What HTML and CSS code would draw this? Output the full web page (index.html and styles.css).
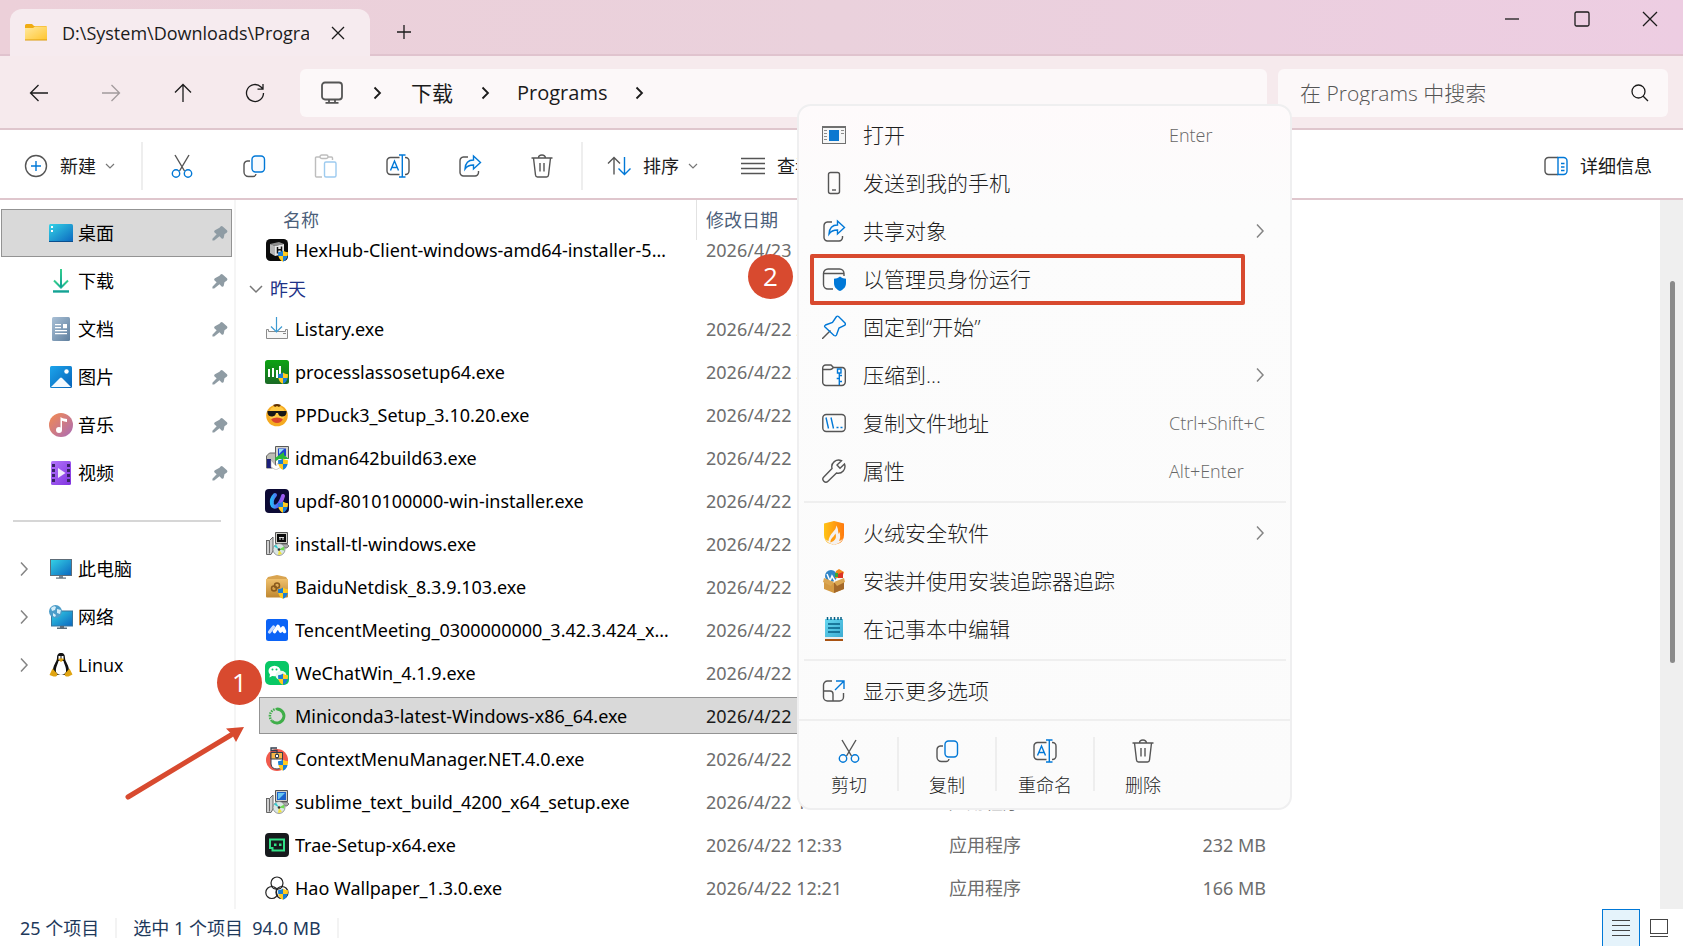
FILE: index.html
```html
<!DOCTYPE html>
<html lang="zh-CN">
<head>
<meta charset="utf-8">
<title>D:\System\Downloads\Programs</title>
<link rel="stylesheet" href="styles.css">
</head>
<body>
<svg class="sprite" aria-hidden="true">
  <defs>
    <linearGradient id="g-folder" x1="0" y1="0" x2="1" y2="1"><stop offset="0" stop-color="#ffe9a0"/><stop offset="1" stop-color="#ffc52e"/></linearGradient>
    <linearGradient id="g-screen" x1="0" y1="0" x2="1" y2="1"><stop offset="0" stop-color="#35d3e6"/><stop offset="1" stop-color="#0b66bf"/></linearGradient>
    <linearGradient id="g-down" x1="0" y1="0" x2="0" y2="1"><stop offset="0" stop-color="#35cf8d"/><stop offset="1" stop-color="#0f9f96"/></linearGradient>
    <linearGradient id="g-doc" x1="0" y1="0" x2="1" y2="1"><stop offset="0" stop-color="#a9c0d6"/><stop offset="1" stop-color="#5f7f9e"/></linearGradient>
    <linearGradient id="g-pic" x1="0" y1="0" x2="1" y2="1"><stop offset="0" stop-color="#1ca5ec"/><stop offset="1" stop-color="#0762b8"/></linearGradient>
    <linearGradient id="g-music" x1="0" y1="0" x2="1" y2="1"><stop offset="0" stop-color="#f58b4e"/><stop offset="1" stop-color="#a96bb8"/></linearGradient>
    <linearGradient id="g-video" x1="0" y1="0" x2="1" y2="1"><stop offset="0" stop-color="#b375fb"/><stop offset="1" stop-color="#8033df"/></linearGradient>
    <linearGradient id="g-green" x1="0" y1="0" x2="0" y2="1"><stop offset="0" stop-color="#0ca312"/><stop offset="1" stop-color="#1a6a25"/></linearGradient>
    <linearGradient id="g-fire" x1="0" y1="0" x2="1" y2="0"><stop offset="0" stop-color="#ffc416"/><stop offset="1" stop-color="#ff7a0f"/></linearGradient>
    <linearGradient id="g-box" x1="0" y1="0" x2="0" y2="1"><stop offset="0" stop-color="#efc06c"/><stop offset="1" stop-color="#bf8731"/></linearGradient>
    <linearGradient id="g-updf" x1="0" y1="0" x2="1" y2="0"><stop offset="0" stop-color="#2bb5f6"/><stop offset=".5" stop-color="#5a62f5"/><stop offset="1" stop-color="#a05cf0"/></linearGradient>
    <linearGradient id="g-note" x1="0" y1="0" x2="1" y2="1"><stop offset="0" stop-color="#66d7f0"/><stop offset="1" stop-color="#3cabd2"/></linearGradient>
    <clipPath id="c-shield"><path d="M18 12.500c1.500 1.200 3 1.700 5 1.700 0 5-1.500 8-5 9.600-3.500-1.600-5-4.600-5-9.600 2 0 3.500-.5 5-1.700z"/></clipPath>
  </defs>
  <symbol id="shield" viewBox="0 0 24 24"><g clip-path="url(#c-shield)"><path fill="#1b7fd4" d="M12 12h6v6h-6zM18 18h6v6h-6z"/><path fill="#ffcb1f" d="M18 12h6v6h-6zM12 18h6v6h-6z"/></g></symbol>

  <symbol id="folder" viewBox="0 0 24 24"><path fill="#f0ab12" d="M1 4.500Q1 3 2.500 3H8l2 2h12.500v4H1z"/><path fill="url(#g-folder)" d="M1 7h8l2-1.500h12V19H1z"/><path fill="#dd9c0c" d="M1 18.500h22v1H1z"/></symbol>
  <symbol id="close" viewBox="0 0 24 24"><path d="M6 6l12 12M18 6L6 18"/></symbol>
  <symbol id="plus" viewBox="0 0 24 24"><path d="M12 5v14M5 12h14"/></symbol>
  <symbol id="min" viewBox="0 0 24 24"><path d="M5 12h14"/></symbol>
  <symbol id="max" viewBox="0 0 24 24"><rect x="5" y="5" width="14" height="14" rx="1.500"/></symbol>
  <symbol id="winclose" viewBox="0 0 24 24"><path d="M5 5l14 14M19 5L5 19"/></symbol>
  <symbol id="back" viewBox="0 0 24 24"><path d="M21 12H3.500M11.500 4l-8 8 8 8"/></symbol>
  <symbol id="fwd" viewBox="0 0 24 24"><path d="M3 12h17.500M12.500 4l8 8-8 8"/></symbol>
  <symbol id="up" viewBox="0 0 24 24"><path d="M12 21V3.500M4 11.500l8-8 8 8"/></symbol>
  <symbol id="reload" viewBox="0 0 24 24"><path d="M20.500 12A8.500 8.500 0 1 1 18 6l2 2M20 3v5.200h-5.500"/></symbol>
  <symbol id="pc" viewBox="0 0 24 24"><rect x="2" y="1.500" width="20" height="17" rx="3"/><path d="M9 18.500v3M15 18.500v3M5.500 21.800h13"/></symbol>
  <symbol id="chev" viewBox="0 0 24 24"><path d="M9.500 6.500L15 12l-5.500 5.500"/></symbol>
  <symbol id="chevd" viewBox="0 0 24 24"><path d="M8 10l4 4 4-4"/></symbol>
  <symbol id="mchev" viewBox="0 0 24 24"><path d="M9 5.500l6 6.500-6 6.500"/></symbol>
  <symbol id="search" viewBox="0 0 24 24"><circle cx="10.500" cy="10.500" r="6.500"/><path d="M15.200 15.200L20 20"/></symbol>

  <symbol id="new" viewBox="0 0 24 24"><circle cx="12" cy="12" r="10.500"/><path class="b" d="M12 7v10M7 12h10"/></symbol>
  <symbol id="cut" viewBox="0 0 24 24"><path d="M5 1l9.500 16M19 1L9.500 17"/><circle class="b" cx="6" cy="19.500" r="3.700"/><circle class="b" cx="18" cy="19.500" r="3.700"/></symbol>
  <symbol id="copy" viewBox="0 0 24 24"><path d="M8 7H5.500A4 4 0 0 0 2 11v7a4.500 4.500 0 0 0 4.500 4.500H11a3 3 0 0 0 3-2.500"/><rect class="b" x="10" y="2" width="12.500" height="16" rx="3.500" fill="#f7fbff"/></symbol>
  <symbol id="paste" viewBox="0 0 24 24"><path d="M6 3H2.500Q1.500 3 1.500 4v18q0 1 1 1H8M14 3h3.500Q18.500 3 18.500 4v2"/><rect x="6" y="1" width="8" height="3.500" rx="1.700"/><rect class="b" x="10.500" y="8" width="11.500" height="15" rx="1.500"/></symbol>
  <symbol id="rename" viewBox="0 0 24 24"><path d="M13.500 3.500h-9A3.500 3.500 0 0 0 1 7v10a3.500 3.500 0 0 0 3.500 3.500h9M19 3.500h.5A3.500 3.500 0 0 1 23 7v10a3.500 3.500 0 0 1-3.500 3.500H19"/><path class="b" d="M4.500 16.500L8.500 7l4 9.500M6 13.500h5.500M16.300 1v22M13 1h6.500M13 23h6.500"/></symbol>
  <symbol id="share" viewBox="0 0 24 24"><path d="M10 3H5.500A4 4 0 0 0 2 7v11.500A3.500 3.500 0 0 0 5.500 22H17a3.500 3.500 0 0 0 3.500-3.500V17"/><path class="b" d="M15.500 2l7 6.500-7 6.500v-4c-4 0-6.500 1-8.500 4 .3-5 3-9 8.500-9z" fill="#f7fbff"/></symbol>
  <symbol id="trash" viewBox="0 0 24 24"><path d="M1.500 4h21M8.500 4a3.500 3 0 0 1 7 0M3.500 4l2 17q.2 2 2 2h9q1.800 0 2-2l2-17M10 9v8.500M14 9v8.500"/></symbol>
  <symbol id="sort" viewBox="0 0 24 24"><path d="M7 20.500V3.500M1 9.500l6-6 6 6"/><path class="b" d="M17.500 3v17.500M11.500 14.500l6 6 6-6"/></symbol>
  <symbol id="list" viewBox="0 0 24 24"><path d="M0 4.500h24M0 9.500h24M0 14.500h24M0 19.500h24"/></symbol>
  <symbol id="detail" viewBox="0 0 24 24"><path d="M14 3.500H4.500A3.500 3.500 0 0 0 1 7v10a3.500 3.500 0 0 0 3.500 3.500H14"/><path class="b" d="M14 3.500h5.500A3.500 3.500 0 0 1 23 7v10a3.500 3.500 0 0 1-3.500 3.500H14zM17 9.500h3.500M17 13h3.500M17 16.500h3.500"/></symbol>

  <symbol id="desktop" viewBox="0 0 24 24"><rect y="3" width="24" height="18" rx="1.500" fill="url(#g-screen)"/><path fill="#fff" d="M2 5h2v2H2zM2 9h2v2H2z"/><path fill="#0b4f8e" d="M0 20h24v1H0z"/></symbol>
  <symbol id="download" viewBox="0 0 24 24"><path fill="none" stroke="url(#g-down)" stroke-width="2" d="M5 11.500l7 7 7-7M4 22.500h16"/><path fill="url(#g-down)" d="M11 0h2v18h-2z"/><path fill="#14a394" d="M4 21.500h16v1.800H4z"/></symbol>
  <symbol id="doc" viewBox="0 0 24 24"><rect x="3" width="18" height="24" rx="1.500" fill="url(#g-doc)"/><path fill="#fff" d="M6 7h6v1.200H6zM6 10h6v1.200H6zM14 7h4v4.200h-4zM6 13h12v1.200H6zM6 16h12v1.200H6z"/></symbol>
  <symbol id="pic" viewBox="0 0 24 24"><rect x="1" y="1" width="22" height="22" rx="1.500" fill="url(#g-pic)"/><path fill="#f3f9fe" d="M2 22l9-9q1-1 2 0l9 9z"/><circle cx="17.500" cy="6.500" r="2.200" fill="#fff"/></symbol>
  <symbol id="music" viewBox="0 0 24 24"><circle cx="12" cy="12" r="12" fill="url(#g-music)"/><circle cx="10" cy="17" r="3" fill="#fff"/><path fill="#fff" d="M11.500 4c2 1.500 4.500 1.500 6.500 2v3c-2-.2-3.500-.6-5-1.200V17h-1.500z"/></symbol>
  <symbol id="video" viewBox="0 0 24 24"><rect x="2" width="20" height="24" rx="1.500" fill="url(#g-video)"/><path fill="#3a2468" d="M3 3h3v3H3zM3 8h3v3H3zM3 13h3v3H3zM3 18h3v3H3zM18 3h3v3h-3zM18 8h3v3h-3zM18 13h3v3h-3zM18 18h3v3h-3z"/><path fill="#f0eafa" d="M9 7l7.500 5L9 17z"/></symbol>
  <symbol id="pin" viewBox="0 0 24 24"><path fill="#8f9ca4" d="M12 4l1.500-2q1.500-1.500 3 0l6 5.500q1.500 1.500 0 3L19 13l-1 5q-1 2.500-3 1l-3-3L4.500 22H2v-2.500L8 13l-3-2.500q-1.500-2 .5-3z"/></symbol>
  <symbol id="monitor" viewBox="0 0 24 24"><rect x="1.500" y="2.500" width="21" height="16" fill="url(#g-screen)" stroke="#5d6c78"/><path fill="#7c8a94" d="M10 19h4v2h-4z"/><path fill="#5d6c78" d="M7 20.500h10v1.200H7z"/></symbol>
  <symbol id="network" viewBox="0 0 24 24"><rect x="2.500" y="6" width="21" height="15" fill="url(#g-screen)" stroke="#38759c"/><path fill="#5d6c78" d="M11 21h4v1.500h3V24H8v-1.500h3z"/><circle cx="6.500" cy="6.500" r="6.500" fill="#4b9cc9"/><path fill="#d5edf8" d="M2 3q3-3 5-1L6 5 3 6zM8 4l4 1-1 4-3-1zM4 8l3 2-1 2-2-1z"/></symbol>
  <symbol id="tux" viewBox="0 0 24 24"><path fill="#111" d="M12 0c3 0 4 2 4 5 0 4 4.500 7 4 14l-3 3H7l-3-3C3.500 12 8 9 8 5c0-3 1-5 4-5z"/><path fill="#fff" d="M9.500 8h5c1 4 3 6 2.500 11-2 4-8 4-10 0-.5-5 1.500-7 2.500-11zM9.500 3h2v3h-2zM12.500 3h2v3h-2z"/><path fill="#e0a412" d="M9 6.500q3-2.500 6 0L12 9zM3.500 15.500l5 5.500q0 3-4 2.500l-4-1.500zM20.500 15.500l-5 5.500q0 3 4 2.500l4-2z"/></symbol>

  <symbol id="hex" viewBox="0 0 24 24"><rect x="1" y="1" width="22" height="22" rx="4.500" fill="#0b0b0b"/><path fill="#8e8e8e" d="M5 6l9-2 5 2-9 2z"/><path fill="#e5e5e5" d="M10 8l9-2v10l-9 2z"/><path fill="#b6b6b6" d="M5 6l5 2v10l-5-3z"/><path stroke="#111" stroke-width="1.500" fill="none" d="M12.500 9v6.500M16.500 8.500V15M12.500 12l4-.5"/></symbol>
  <symbol id="listary" viewBox="0 0 24 24"><path fill="#f7f7f7" stroke="#8b8b8b" d="M1.500 12.500h2v2h17v-2h2v9h-21z"/><path stroke="#888" d="M18 16.500h3"/><path fill="none" stroke="#3d9ad1" stroke-width="1.200" d="M11.500 0v14.500M6 9.500l5.500 5.500L17 9.500"/></symbol>
  <symbol id="lasso" viewBox="0 0 24 24"><rect width="24" height="24" rx="2.500" fill="url(#g-green)"/><path fill="#fff" d="M3 9h2v8H3zM7 8h2v9H7zM11 10h2v8h-2zM14 6h2v12h-2z"/></symbol>
  <symbol id="duck" viewBox="0 0 24 24"><circle cx="12" cy="12.500" r="10.800" fill="#f5aa21"/><circle cx="12" cy="11" r="8" fill="#ffca45"/><path fill="#603000" d="M8 2q4-2 8 0l-2 2-2-1-2 1z"/><path fill="#171717" d="M2.500 8h19v2q-1 4-5 3.500-3-.5-3.500-3.500h-2q-.5 3-3.500 3.500-4 .5-5-3.500z"/><path fill="#d9452d" d="M6 16q6-3 12 0-2 4-6 4t-6-4z"/></symbol>
  <symbol id="idm" viewBox="0 0 24 24"><path fill="#d4d4cc" stroke="#5a5a5a" d="M10.500.5h13v12h-13z"/><path fill="#1d43d1" d="M13 2.500h8V10h-8z"/><path fill="#9adcf6" d="M14 3h5l-5 5z"/><path fill="#bdbdb5" stroke="#666" d="M1.500 10l3-3h6v12l-3 3h-6z"/><path fill="#1c1f7a" d="M2 13h4v9H2z"/><path fill="#fff" stroke="#999" stroke-width=".5" d="M6 14l5 6 2-3 3 4-5 3-5-3z"/><path fill="#28b938" d="M10 12l9-6v3l5 4H14l-3 2z"/></symbol>
  <symbol id="updf" viewBox="0 0 24 24"><rect width="24" height="24" rx="4" fill="#0c0a35"/><path fill="none" stroke="url(#g-updf)" stroke-width="4" stroke-linecap="round" d="M10 6q-4 4-3 9 1 4 5 2 4-3 6-10"/></symbol>
  <symbol id="setup" viewBox="0 0 24 24"><path fill="#cfcfc9" stroke="#555" d="M10.500.5h12v11h-12z"/><path fill="#0a0a0a" d="M12 2h9v8h-9z"/><path stroke="#ddd" fill="none" d="M14 5.500h5M15 5v3M18 5v3"/><path fill="#cfcfcf" stroke="#666" d="M1 8.500h3.500L8 5v14l-2 3.500H1.500V9M4.500 8.500v13"/><path fill="#aaa" stroke="#555" stroke-width=".7" d="M13 12h9l2 2-2 2h-8z"/><circle cx="14" cy="17.500" r="6" fill="#d9e6e4" stroke="#777" stroke-width=".7"/><path fill="#6edb53" d="M14 17.500l5-3 .5 4z"/><path fill="#36c9ce" d="M14 17.500l-5-3 2-2z"/><path fill="#f1e33a" d="M14 17.500l-1 5.500 4-1z"/><circle cx="14" cy="17.500" r="1.300" fill="#333"/></symbol>
  <symbol id="baidu" viewBox="0 0 24 24"><path fill="#d9a450" d="M3 2l9-2 9 2 2 3H1z"/><rect x="1" y="4" width="22" height="18.500" rx="1" fill="url(#g-box)"/><circle cx="9" cy="13.500" r="2.500" fill="none" stroke="#8a5a1c" stroke-width="1.500"/><circle cx="12" cy="10.500" r="2.500" fill="none" stroke="#8a5a1c" stroke-width="1.500"/></symbol>
  <symbol id="tencent" viewBox="0 0 24 24"><rect x="1" y="1" width="22" height="22" rx="2.500" fill="#0b63f6"/><path fill="none" stroke="#c9dcff" stroke-width="3.200" stroke-linecap="round" stroke-linejoin="round" d="M4.500 14L8.500 9"/><path fill="none" stroke="#fff" stroke-width="3.600" stroke-linecap="round" stroke-linejoin="round" d="M9.500 13.500l3.500-5 2.500 4.500 2.500-3 1.500 3.500"/></symbol>
  <symbol id="wechat" viewBox="0 0 24 24"><rect width="24" height="24" rx="5" fill="#08c765"/><ellipse cx="9.500" cy="10" rx="6" ry="5.200" fill="#fff"/><path fill="#fff" d="M5 13l-.5 3.500L8 14.500z"/><ellipse cx="16" cy="14.500" rx="5.500" ry="4.700" fill="#e7f9ee"/><circle cx="7.500" cy="8.500" r="1" fill="#08c765"/><circle cx="11.500" cy="8.500" r="1" fill="#08c765"/></symbol>
  <symbol id="conda" viewBox="0 0 24 24"><path fill="none" stroke="#3fae49" stroke-width="3" d="M12 5a7 7 0 1 1-5 12"/><path fill="none" stroke="#3fae49" stroke-width="2.500" stroke-dasharray="1.500 1" d="M7 17a7 7 0 0 1 5-12"/></symbol>
  <symbol id="cmm" viewBox="0 0 24 24"><circle cx="12" cy="13" r="11" fill="#f15b4d"/><path fill="none" stroke="#333e4e" stroke-width="1.300" d="M12 6V3.500H6V1h6"/><path fill="#fff" stroke="#333e4e" d="M6 5.500h11.500V17q0 5-5.500 5t-6-5z"/><path fill="#f8b646" stroke="#333e4e" d="M6 5.500h11.500V12H6zM12 5.500V12"/><path fill="#fff" stroke="#333e4e" d="M10.500 7.500h3v3h-3z"/></symbol>
  <symbol id="subl" viewBox="0 0 24 24"><use href="#setup"/><path fill="#1b62cc" d="M12 2h9v8h-9z"/><path fill="#67c6f2" d="M13 3h7l-6 6h-1z"/></symbol>
  <symbol id="trae" viewBox="0 0 24 24"><rect width="24" height="24" rx="4" fill="#171a1d"/><path fill="none" stroke="#32e086" stroke-width="2" d="M5 6.500h14v11H7.500V15H5z"/><path fill="#32e086" d="M9 10.500h2.500V13H9zM14 10.500h2.500V13H14z"/></symbol>
  <symbol id="hao" viewBox="0 0 24 24"><g fill="#fff" stroke="#222" stroke-width="1.200"><circle cx="12" cy="7" r="6"/><circle cx="6.800" cy="16.500" r="6"/><circle cx="17" cy="16.500" r="6"/><path d="M6.500 10.500q2 3 5.500 2.500 3.500.5 5.500-2.500M12 13q-1.500 4 1 7" fill="none"/></g></symbol>

  <symbol id="open" viewBox="0 0 24 24"><rect x=".5" y="3.500" width="23" height="17" fill="#f6f6f6" stroke="#707070"/><path fill="#707070" d="M0 3h24v2H0z"/><path stroke="#8c8c8c" d="M2 7.500h3M2 10.500h3M2 13.500h3M2 16.500h3M19 7.500h3M19 10.500h3"/><rect x="7" y="7" width="10" height="11" fill="#0b78d0"/></symbol>
  <symbol id="phone" viewBox="0 0 24 24"><rect x="6.500" y="1.500" width="11" height="21" rx="2"/><path d="M10 19h4"/></symbol>
  <symbol id="admin" viewBox="0 0 24 24"><path d="M11 22H6a4.500 4.500 0 0 1-4.500-4.500v-11A4.500 4.500 0 0 1 6 2h11.500A4.500 4.500 0 0 1 22 6.500V9M1.500 6.500H22"/><path class="bf" d="M18 9.500c2 1.800 4 2.200 6 2.200v4.300c0 4-2.500 6.500-6 8-3.500-1.500-6-4-6-8v-4.300c2 0 4-.4 6-2.200z"/></symbol>
  <symbol id="pinstart" viewBox="0 0 24 24"><path d="M8.500 15.500L0 24"/><path class="b" d="M14.500 1.500q1-.8 2 0l6.500 6.500q1 1.500-.5 2.500l-5.500 2.500-2.500 7q-.8 1.500-2.500.5L3 12q-1-1 .5-2l7-2.500z"/></symbol>
  <symbol id="zip" viewBox="0 0 24 24"><path d="M4 2h5l2.500 2.500H20A3.500 3.500 0 0 1 23.300 8v11a3.500 3.500 0 0 1-3.500 3.500H4A3.300 3.300 0 0 1 .7 19V5A3 3 0 0 1 4 2zM.7 6.500h7.500q1.500 0 3.300-2"/><path class="b" d="M15.500 6h3.500v4h-3.500zM17.300 10v12M17.300 12.500H20M14.700 15.500h2.600M17.300 18.500H20"/></symbol>
  <symbol id="path" viewBox="0 0 24 24"><rect x=".8" y="3.500" width="22.400" height="17" rx="3.500"/><path class="b" d="M4 6.500l2.500 11M9 6.500l2.500 11M14.500 16.500h2M18.500 16.500h2"/></symbol>
  <symbol id="wrench" viewBox="0 0 24 24"><path d="M19.500 1.700A6.800 6.800 0 0 0 10 9.500L1.800 18a2.900 2.900 0 0 0 4.200 4.200L14.500 14A6.800 6.800 0 0 0 22.500 5L18 9.200 15 6z"/></symbol>
  <symbol id="fire" viewBox="0 0 24 24"><path fill="url(#g-fire)" d="M2 2.500L12 0l10 2.500V14c0 4-2 6.500-4 8l-6 2-6-2c-2-1.500-4-4-4-8z"/><path fill="#f5f1ef" d="M3 17.500q2 4.500 9 6.500 7-2 9-6.500-2 2-4 2.500 2-4 .5-9l-1 2q0-5-2-8.500-.5 4-3.500 6.500-4 4-4.500 9-2-.5-3.500-2.500z"/><path fill="#ff9d10" d="M8.500 21.500q-.5-3 3-6l2-3q1.500 5-2 7.500z"/></symbol>
  <symbol id="crate" viewBox="0 0 24 24"><circle cx="9" cy="7" r="6" fill="#3286c7"/><path fill="none" stroke="#fff" stroke-width="1.500" d="M5 5l3 7 2-5 3 5"/><path fill="#f08a1d" d="M14 2l3-2 5 3-2 6h-7z"/><path fill="#db3325" d="M16 5l5-2v6h-5z"/><path fill="#38a83a" d="M13 4h3v4h-3z"/><path fill="#d49a43" d="M2 11l10 3 10-3v9l-10 4-10-4z"/><path fill="#a4692a" d="M12 14l10-3v9l-10 4z"/><path fill="#dba652" d="M2 9l10 4-3 4-8-4zM22 9l-10 4 3 4 8-4z"/></symbol>
  <symbol id="notepad" viewBox="0 0 24 24"><rect x="3" y="2" width="18" height="19" fill="url(#g-note)"/><path fill="#a95212" d="M3 22h18v2H3z"/><path fill="#e9eef0" d="M3 20h18v2H3z"/><path stroke="#075f85" stroke-width="1.600" d="M6 7h12M6 11h12M6 15h12"/><path stroke="#075f85" stroke-width="1.500" d="M5.500 0v3M9 0v3M12.500 0v3M16 0v3M19 0v3"/></symbol>
  <symbol id="more" viewBox="0 0 24 24"><path d="M10 2H5.500A4 4 0 0 0 1.500 6v12a4 4 0 0 0 4 4h12a4 4 0 0 0 4-4v-4M1.500 12H8q3 0 3 3v7"/><path class="b" d="M14 2h8v8M22 2l-9 9"/></symbol>
  <symbol id="vlist" viewBox="0 0 24 24"><path d="M3 4.500h18M3 9.500h18M3 14.500h18M3 19.500h18"/></symbol>
  <symbol id="vthumb" viewBox="0 0 24 24"><rect x="3.500" y="3.500" width="17" height="14"/><path d="M3 20.500h18"/></symbol>
</svg>

<header class="titlebar">
  <div class="tab">
    <svg class="ic"><use href="#folder"/></svg>
    <span class="tab-title">D:\System\Downloads\Programs</span>
    <button class="icon-btn tab-close" aria-label="关闭标签页"><svg class="ic line"><use href="#close"/></svg></button>
  </div>
  <button class="icon-btn new-tab" aria-label="新建标签页"><svg class="ic line"><use href="#plus"/></svg></button>
  <div class="window-controls">
    <button class="icon-btn" aria-label="最小化"><svg class="ic line"><use href="#min"/></svg></button>
    <button class="icon-btn" aria-label="最大化"><svg class="ic line"><use href="#max"/></svg></button>
    <button class="icon-btn" aria-label="关闭"><svg class="ic line"><use href="#winclose"/></svg></button>
  </div>
</header>

<nav class="navbar">
  <div class="nav-buttons">
    <button class="icon-btn" aria-label="后退"><svg class="ic line"><use href="#back"/></svg></button>
    <button class="icon-btn" aria-label="前进" disabled><svg class="ic line"><use href="#fwd"/></svg></button>
    <button class="icon-btn" aria-label="向上"><svg class="ic line"><use href="#up"/></svg></button>
    <button class="icon-btn" aria-label="刷新"><svg class="ic line"><use href="#reload"/></svg></button>
  </div>
  <div class="address">
    <svg class="ic pc"><use href="#pc"/></svg>
    <svg class="ic sep"><use href="#chev"/></svg>
    <button class="crumb">下载</button>
    <svg class="ic sep"><use href="#chev"/></svg>
    <button class="crumb latin">Programs</button>
    <svg class="ic sep"><use href="#chev"/></svg>
  </div>
  <div class="search">
    <input type="search" placeholder="在 Programs 中搜索" aria-label="搜索">
    <svg class="ic line"><use href="#search"/></svg>
  </div>
</nav>

<div class="toolbar">
  <button class="tool new"><svg class="ic duo"><use href="#new"/></svg><span>新建</span><svg class="ic caret"><use href="#chevd"/></svg></button>
  <div class="tool-group">
    <button class="icon-btn" aria-label="剪切"><svg class="ic duo"><use href="#cut"/></svg></button>
    <button class="icon-btn" aria-label="复制"><svg class="ic duo"><use href="#copy"/></svg></button>
    <button class="icon-btn" aria-label="粘贴" disabled><svg class="ic duo"><use href="#paste"/></svg></button>
    <button class="icon-btn" aria-label="重命名"><svg class="ic duo"><use href="#rename"/></svg></button>
    <button class="icon-btn" aria-label="共享"><svg class="ic duo"><use href="#share"/></svg></button>
    <button class="icon-btn" aria-label="删除"><svg class="ic duo"><use href="#trash"/></svg></button>
  </div>
  <button class="tool sort"><svg class="ic duo"><use href="#sort"/></svg><span>排序</span><svg class="ic caret"><use href="#chevd"/></svg></button>
  <button class="tool view"><svg class="ic duo"><use href="#list"/></svg><span>查看</span></button>
  <button class="tool details"><svg class="ic duo"><use href="#detail"/></svg><span>详细信息</span></button>
</div>

<main class="content">
  <aside class="sidebar">
    <ul class="pinned">
      <li><a href="#" class="place current"><svg class="ic"><use href="#desktop"/></svg><span>桌面</span><svg class="pin"><use href="#pin"/></svg></a></li>
      <li><a href="#" class="place"><svg class="ic"><use href="#download"/></svg><span>下载</span><svg class="pin"><use href="#pin"/></svg></a></li>
      <li><a href="#" class="place"><svg class="ic"><use href="#doc"/></svg><span>文档</span><svg class="pin"><use href="#pin"/></svg></a></li>
      <li><a href="#" class="place"><svg class="ic"><use href="#pic"/></svg><span>图片</span><svg class="pin"><use href="#pin"/></svg></a></li>
      <li><a href="#" class="place"><svg class="ic"><use href="#music"/></svg><span>音乐</span><svg class="pin"><use href="#pin"/></svg></a></li>
      <li><a href="#" class="place"><svg class="ic"><use href="#video"/></svg><span>视频</span><svg class="pin"><use href="#pin"/></svg></a></li>
    </ul>
    <ul class="roots">
      <li><a href="#" class="place"><svg class="ic expand"><use href="#mchev"/></svg><svg class="ic"><use href="#monitor"/></svg><span>此电脑</span></a></li>
      <li><a href="#" class="place"><svg class="ic expand"><use href="#mchev"/></svg><svg class="ic"><use href="#network"/></svg><span>网络</span></a></li>
      <li><a href="#" class="place"><svg class="ic expand"><use href="#mchev"/></svg><svg class="ic"><use href="#tux"/></svg><span>Linux</span></a></li>
    </ul>
  </aside>

  <section class="files">
    <table class="file-table">
      <colgroup><col class="c-name"><col class="c-date"><col class="c-type"><col class="c-size"></colgroup>
      <thead><tr><th>名称</th><th>修改日期</th><th>类型</th><th>大小</th></tr></thead>
      <tbody>
        <tr><td><div class="cell"><svg class="ic"><use href="#hex"/><use href="#shield"/></svg><span>HexHub-Client-windows-amd64-installer-58.0.exe</span></div></td><td><div class="cell">2026/4/23 10:12</div></td><td><div class="cell">应用程序</div></td><td><div class="cell">98 MB</div></td></tr>
        <tr class="group"><td colspan="4"><div class="group-label"><svg class="ic"><use href="#chevd"/></svg><span>昨天</span></div></td></tr>
        <tr><td><div class="cell"><svg class="ic"><use href="#listary"/></svg><span>Listary.exe</span></div></td><td><div class="cell">2026/4/22 20:15</div></td><td><div class="cell">应用程序</div></td><td><div class="cell">9 MB</div></td></tr>
        <tr><td><div class="cell"><svg class="ic"><use href="#lasso"/><use href="#shield"/></svg><span>processlassosetup64.exe</span></div></td><td><div class="cell">2026/4/22 20:02</div></td><td><div class="cell">应用程序</div></td><td><div class="cell">3 MB</div></td></tr>
        <tr><td><div class="cell"><svg class="ic"><use href="#duck"/></svg><span>PPDuck3_Setup_3.10.20.exe</span></div></td><td><div class="cell">2026/4/22 19:40</div></td><td><div class="cell">应用程序</div></td><td><div class="cell">70 MB</div></td></tr>
        <tr><td><div class="cell"><svg class="ic"><use href="#idm"/><use href="#shield"/></svg><span>idman642build63.exe</span></div></td><td><div class="cell">2026/4/22 18:32</div></td><td><div class="cell">应用程序</div></td><td><div class="cell">12 MB</div></td></tr>
        <tr><td><div class="cell"><svg class="ic"><use href="#updf"/><use href="#shield"/></svg><span>updf-8010100000-win-installer.exe</span></div></td><td><div class="cell">2026/4/22 18:10</div></td><td><div class="cell">应用程序</div></td><td><div class="cell">2 MB</div></td></tr>
        <tr><td><div class="cell"><svg class="ic"><use href="#setup"/></svg><span>install-tl-windows.exe</span></div></td><td><div class="cell">2026/4/22 17:21</div></td><td><div class="cell">应用程序</div></td><td><div class="cell">24 MB</div></td></tr>
        <tr><td><div class="cell"><svg class="ic"><use href="#baidu"/><use href="#shield"/></svg><span>BaiduNetdisk_8.3.9.103.exe</span></div></td><td><div class="cell">2026/4/22 16:43</div></td><td><div class="cell">应用程序</div></td><td><div class="cell">420 MB</div></td></tr>
        <tr><td><div class="cell"><svg class="ic"><use href="#tencent"/></svg><span>TencentMeeting_0300000000_3.42.3.424_x86_64.exe</span></div></td><td><div class="cell">2026/4/22 15:30</div></td><td><div class="cell">应用程序</div></td><td><div class="cell">260 MB</div></td></tr>
        <tr><td><div class="cell"><svg class="ic"><use href="#wechat"/><use href="#shield"/></svg><span>WeChatWin_4.1.9.exe</span></div></td><td><div class="cell">2026/4/22 15:11</div></td><td><div class="cell">应用程序</div></td><td><div class="cell">230 MB</div></td></tr>
        <tr class="selected"><td><div class="cell"><svg class="ic"><use href="#conda"/></svg><span>Miniconda3-latest-Windows-x86_64.exe</span></div></td><td><div class="cell">2026/4/22 14:50</div></td><td><div class="cell">应用程序</div></td><td><div class="cell">94 MB</div></td></tr>
        <tr><td><div class="cell"><svg class="ic"><use href="#cmm"/><use href="#shield"/></svg><span>ContextMenuManager.NET.4.0.exe</span></div></td><td><div class="cell">2026/4/22 14:12</div></td><td><div class="cell">应用程序</div></td><td><div class="cell">1 MB</div></td></tr>
        <tr><td><div class="cell"><svg class="ic"><use href="#subl"/></svg><span>sublime_text_build_4200_x64_setup.exe</span></div></td><td><div class="cell">2026/4/22 13:20</div></td><td><div class="cell">应用程序</div></td><td><div class="cell">17 MB</div></td></tr>
        <tr><td><div class="cell"><svg class="ic"><use href="#trae"/></svg><span>Trae-Setup-x64.exe</span></div></td><td><div class="cell">2026/4/22 12:33</div></td><td><div class="cell">应用程序</div></td><td><div class="cell">232 MB</div></td></tr>
        <tr><td><div class="cell"><svg class="ic"><use href="#hao"/><use href="#shield"/></svg><span>Hao Wallpaper_1.3.0.exe</span></div></td><td><div class="cell">2026/4/22 12:21</div></td><td><div class="cell">应用程序</div></td><td><div class="cell">166 MB</div></td></tr>
      </tbody>
    </table>
  </section>
  <div class="scrollbar"><div class="thumb"></div></div>
</main>

<footer class="statusbar">
  <span class="status-item">25 个项目</span>
  <span class="status-item">选中 1 个项目&nbsp; 94.0 MB</span>
  <div class="view-switch">
    <button class="icon-btn active" aria-label="详细信息视图"><svg class="ic"><use href="#vlist"/></svg></button>
    <button class="icon-btn" aria-label="缩略图视图"><svg class="ic"><use href="#vthumb"/></svg></button>
  </div>
</footer>

<div class="context-menu" role="menu">
  <div class="menu-section">
    <button class="item" role="menuitem"><svg class="ic"><use href="#open"/></svg><span>打开</span><kbd>Enter</kbd></button>
    <button class="item" role="menuitem"><svg class="ic duo"><use href="#phone"/></svg><span>发送到我的手机</span></button>
    <button class="item" role="menuitem"><svg class="ic duo"><use href="#share"/></svg><span>共享对象</span><svg class="ic more"><use href="#mchev"/></svg></button>
    <button class="item marked" role="menuitem"><svg class="ic duo"><use href="#admin"/></svg><span>以管理员身份运行</span></button>
    <button class="item" role="menuitem"><svg class="ic duo"><use href="#pinstart"/></svg><span>固定到“开始”</span></button>
    <button class="item" role="menuitem"><svg class="ic duo"><use href="#zip"/></svg><span>压缩到...</span><svg class="ic more"><use href="#mchev"/></svg></button>
    <button class="item" role="menuitem"><svg class="ic duo"><use href="#path"/></svg><span>复制文件地址</span><kbd>Ctrl+Shift+C</kbd></button>
    <button class="item" role="menuitem"><svg class="ic duo"><use href="#wrench"/></svg><span>属性</span><kbd>Alt+Enter</kbd></button>
  </div>
  <div class="menu-section">
    <button class="item" role="menuitem"><svg class="ic"><use href="#fire"/></svg><span>火绒安全软件</span><svg class="ic more"><use href="#mchev"/></svg></button>
    <button class="item" role="menuitem"><svg class="ic"><use href="#crate"/></svg><span>安装并使用安装追踪器追踪</span></button>
    <button class="item" role="menuitem"><svg class="ic"><use href="#notepad"/></svg><span>在记事本中编辑</span></button>
  </div>
  <div class="menu-section">
    <button class="item" role="menuitem"><svg class="ic duo"><use href="#more"/></svg><span>显示更多选项</span></button>
  </div>
  <div class="quick">
    <button class="quick-btn"><svg class="ic duo"><use href="#cut"/></svg><span>剪切</span></button>
    <button class="quick-btn"><svg class="ic duo"><use href="#copy"/></svg><span>复制</span></button>
    <button class="quick-btn"><svg class="ic duo"><use href="#rename"/></svg><span>重命名</span></button>
    <button class="quick-btn"><svg class="ic duo"><use href="#trash"/></svg><span>删除</span></button>
  </div>
</div>

<div class="step step-one">1</div>
<div class="step step-two">2</div>
<svg class="arrow" viewBox="0 0 120 76"><path d="M3 73L106 11" fill="none" stroke="#d84a2f" stroke-width="5" stroke-linecap="round"/><path d="M119 3L101 4.500l6 6L111 18z" fill="#d84a2f"/></svg>
</body>
</html>
```
FILE: styles.css
```css
*, *::before, *::after { box-sizing: border-box; }

body {
  margin: 0;
  height: 100vh;
  display: flex;
  flex-direction: column;
  overflow: hidden;
  position: relative;
  background: #fff;
  color: #000;
  font: 18px/24px "Open Sans", "Noto Sans CJK SC", sans-serif;
}

button, input { font: inherit; color: inherit; background: none; border: 0; padding: 0; margin: 0; }
ul { list-style: none; margin: 0; padding: 0; }
a { color: inherit; text-decoration: none; }

.sprite { position: absolute; width: 0; height: 0; }
.ic { width: 24px; height: 24px; flex: none; display: block; }
.line { fill: none; stroke: #1b1b1b; stroke-width: 1.3; }
.duo { fill: none; stroke: #555; stroke-width: 1.4; }
.b { stroke: #0078d7; }
.bf { fill: #0078d7; stroke: none; }
.icon-btn { display: flex; align-items: center; justify-content: center; }
.icon-btn:disabled { opacity: .38; }

/* Title bar */
.titlebar {
  flex: none;
  height: 56px;
  display: flex;
  align-items: flex-end;
  padding-left: 10px;
  background: linear-gradient(90deg, #ecd0d9, #ead1dc 50%, #edcde2);
  border-bottom: 2px solid #e0c3ce;
}
.tab {
  width: 360px;
  height: 47px;
  margin-bottom: -2px;
  padding: 0 20px 0 14px;
  display: flex;
  align-items: center;
  background: #f6ebef;
  border-radius: 12px 12px 0 0;
}
.tab-title {
  flex: 1;
  margin: 0 17px 0 14px;
  overflow: hidden;
  white-space: nowrap;
  font-weight: 500;
  color: #1b1b1b;
}
.new-tab { width: 68px; height: 44px; }
.window-controls { margin-left: auto; align-self: flex-start; display: flex; }
.window-controls .icon-btn { width: 70px; height: 37px; }
.window-controls .icon-btn:last-child { width: 66px; }

/* Navigation row */
.navbar {
  flex: none;
  height: 74px;
  display: flex;
  align-items: center;
  padding: 2px 15px 0 3px;
  background: #f6eaed;
  border-bottom: 2px solid #dfc6cd;
}
.nav-buttons { display: flex; margin-right: 9px; }
.nav-buttons .icon-btn { width: 72px; height: 48px; }
.address, .search {
  height: 48px;
  display: flex;
  align-items: center;
  background: #fcf8f9;
  border-radius: 6px;
  font-size: 21px;
  font-weight: 300;
}
.address { flex: 1; padding-left: 20px; color: #1b1b1b; }
.address .ic { fill: none; stroke: #555; stroke-width: 1.800; }
.address .sep { stroke: #1b1b1b; margin: 0 20px; }
.address .pc + .sep { margin: 0 22px 0 21px; }
.address .crumb { font-weight: 400; }
.address .latin { font-size: 20px; }
.search { width: 390px; margin-left: 11px; padding: 0 16px 0 22px; }
.search input { flex: 1; min-width: 0; outline: 0; }
.search input::placeholder { color: #555; opacity: 1; }

/* Command bar */
.toolbar {
  flex: none;
  height: 70px;
  display: flex;
  align-items: center;
  padding: 4px 31px 0 24px;
  border-bottom: 2px solid #dfc6cd;
  color: #1b1b1b;
}
.tool { height: 48px; display: flex; align-items: center; gap: 12px; flex: none; }
.caret { fill: none; stroke: #777; stroke-width: 1.200; margin-left: -10px; }
.new { width: 117px; }
.tool-group {
  display: flex;
  height: 48px;
  align-items: center;
  padding: 0 3px;
  border: solid #eee;
  border-width: 0 2px;
}
.tool-group .icon-btn { width: 72px; height: 48px; }
.sort { margin-left: 24px; }
.view { margin-left: 36px; }
.details { margin-left: auto; }

/* Body */
.content { flex: 1; min-height: 0; display: flex; }
.sidebar { width: 236px; flex: none; padding-top: 9px; border-right: 2px solid #f5f5f5; }
.place { height: 48px; display: flex; align-items: center; gap: 5px; padding: 0 3px 0 47px; margin: 0 2px 0 1px; border: 1px solid transparent; }
.place.current { background: #d9d9d9; border-color: #939393; }
.pin { width: 17px; height: 17px; margin-left: auto; }
.roots { margin-top: 23px; padding-top: 25px; position: relative; }
.roots::before { content: ""; position: absolute; top: 0; left: 13px; right: 13px; height: 2px; background: #d6d6d6; }
.roots .place { padding-left: 10px; }
.roots .expand { margin-right: 8px; }
.expand, .more { fill: none; stroke: #858585; stroke-width: 1.500; }

.files { flex: 1; min-width: 0; overflow: hidden; padding-left: 23px; font-family: "Noto Sans", "Noto Sans CJK SC", sans-serif; }
.file-table { width: 1031px; table-layout: fixed; border-collapse: collapse; }
.c-name { width: 438px; }
.c-date { width: 242px; }
.c-type { width: 160px; }
.file-table th {
  position: relative;
  height: 28px;
  padding: 12px 0 0 9px;
  line-height: 16px;
  text-align: left;
  font-weight: 400;
  color: #4c607a;
}
.file-table th:first-child { padding-left: 24px; }
.file-table th:first-child::after {
  content: "";
  position: absolute;
  top: 0;
  right: 0;
  width: 1px;
  height: 40px;
  background: #e2e2e2;
}
.file-table td { padding: 3px 0; }
.cell {
  height: 37px;
  display: flex;
  align-items: center;
  padding-left: 9px;
  border: solid transparent;
  border-width: 1px 0;
  color: #6d6d6d;
  white-space: nowrap;
}
td:first-child .cell { padding: 0 25px 0 5px; gap: 6px; border-left-width: 1px; color: #000; }
td:first-child .cell span { overflow: hidden; text-overflow: ellipsis; }
td:nth-child(3) .cell { padding-left: 10px; }
td:last-child .cell { justify-content: flex-end; padding-right: 24px; }
.selected .cell { background: #d9d9d9; border-color: #939393; color: #1b1b1b; }
.file-table .group td { padding: 0; }
.group-label { height: 36px; display: flex; align-items: center; margin-left: -15px; gap: 2px; color: #1e3287; }
.group-label .ic { fill: none; stroke: #777; stroke-width: 1; transform: scale(1.5); }

.scrollbar { width: 23px; flex: none; background: #efefef; padding: 81px 8px 0 10px; }
.thumb { width: 5px; height: 382px; border-radius: 3px; background: #8a8a8a; }

/* Status bar */
.statusbar { flex: none; height: 37px; display: flex; align-items: center; padding: 0 5px 0 20px; color: #1e395b; font-family: "Noto Sans", "Noto Sans CJK SC", sans-serif; }
.status-item { padding-right: 16px; margin-right: 16px; border-right: 2px solid #f3f3f3; line-height: 20px; }
.view-switch { margin-left: auto; display: flex; align-self: stretch; }
.view-switch .icon-btn { width: 38px; border: 1px solid transparent; }
.view-switch .active { background: #e5f3fb; border-color: #0078d7; border-bottom: 0; }
.view-switch .ic { fill: none; stroke: #444; stroke-width: 1; }

/* Context menu */
.context-menu {
  position: absolute;
  left: 797px;
  top: 104px;
  width: 495px;
  background: linear-gradient(#fefafb, #fcfcfc 15%, #fbfbfb);
  border: 2px solid #efeff0;
  border-radius: 14px;
  padding-top: 5px;
  color: #1f1f1f;
  font-weight: 300;
}
.menu-section { margin: 0 4px 0 5px; }
.menu-section + .menu-section { margin-top: 6px; padding-top: 6px; border-top: 2px solid #efefef; }
.item {
  position: relative;
  width: 100%;
  height: 48px;
  display: flex;
  align-items: center;
  padding: 0 14px 0 18px;
  gap: 17px;
  text-align: left;
  font-size: 21px;
}
.item kbd { position: absolute; left: 365px; font: inherit; font-size: 18px; color: #666; }
.item .more { margin-left: auto; }
.marked::after { content: ""; position: absolute; left: 6px; right: 41px; top: -1px; height: 51px; border: 4px solid #d84a2f; border-radius: 2px; }
.quick { display: flex; margin-top: 4px; padding: 16px 2px; height: 89px; border-top: 2px solid #efefef; }
.quick-btn { width: 98px; height: 54px; display: flex; flex-direction: column; align-items: center; gap: 10px; padding-top: 2px; line-height: 24px; border-right: 2px solid #eee; }
.quick-btn:last-child { border-right-color: transparent; }

/* Step markers */
.step {
  position: absolute;
  width: 45px;
  height: 45px;
  border-radius: 50%;
  background: #d84a2f;
  color: #fff;
  font-size: 26px;
  line-height: 45px;
  text-align: center;
}
.step-one { left: 217px; top: 660px; }
.step-two { left: 748px; top: 254px; }
.arrow { position: absolute; left: 125px; top: 724px; width: 120px; height: 76px; }
```
